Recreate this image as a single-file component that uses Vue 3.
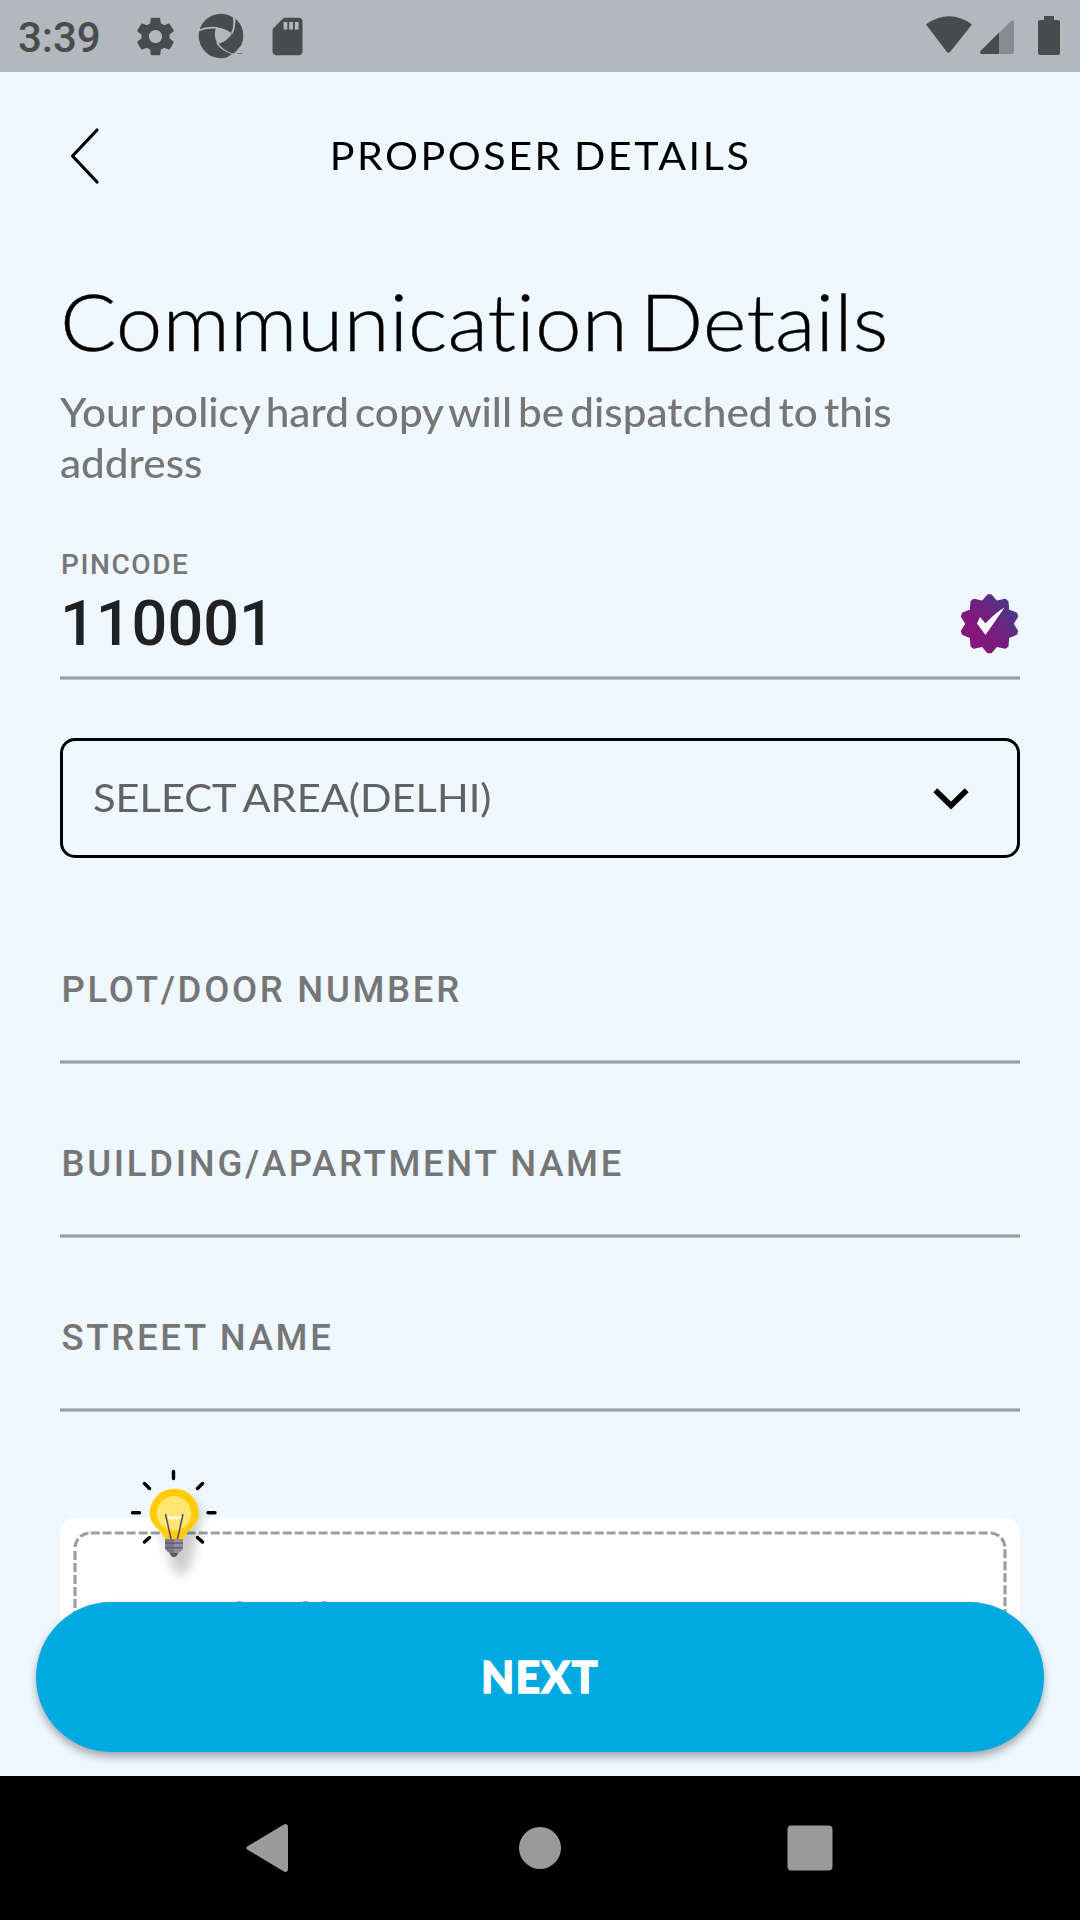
<script setup>
const fields = ['PLOT/DOOR NUMBER', 'BUILDING/APARTMENT NAME', 'STREET NAME']

// Ten-pointed rosette outline for the verified badge
const rosette = (() => {
  const pts = []
  for (let i = 0; i < 10; i++) {
    const a = (Math.PI / 5) * i - Math.PI / 2
    const add = (r, t) => pts.push(`${(29.5 + r * Math.cos(t)).toFixed(2)},${(29.8 + r * Math.sin(t)).toFixed(2)}`)
    add(28.4, a - 0.05)
    add(28.4, a + 0.05)
    add(22.9, a + Math.PI / 10)
  }
  return pts.join(' ')
})()
</script>

<template>
  <div class="screen">
    <div class="status">
      <span class="time">3:39</span>
      <svg class="gear" width="45" height="45" viewBox="0 0 24 24"><path fill="#4a4b4c" d="M19.43 12.98c.04-.32.07-.64.07-.98s-.03-.66-.07-.98l2.11-1.65c.19-.15.24-.42.12-.64l-2-3.46c-.12-.22-.39-.3-.61-.22l-2.49 1c-.52-.4-1.08-.73-1.69-.98l-.38-2.65C14.46 2.18 14.25 2 14 2h-4c-.25 0-.46.18-.49.42l-.38 2.65c-.61.25-1.17.59-1.69.98l-2.49-1c-.23-.09-.49 0-.61.22l-2 3.46c-.13.22-.07.49.12.64l2.11 1.65c-.04.32-.07.65-.07.98s.03.66.07.98l-2.11 1.65c-.19.15-.24.42-.12.64l2 3.46c.12.22.39.3.61.22l2.49-1c.52.4 1.08.73 1.69.98l.38 2.65c.03.24.24.42.49.42h4c.25 0 .46-.18.49-.42l.38-2.65c.61-.25 1.17-.59 1.69-.98l2.49 1c.23.09.49 0 .61-.22l2-3.46c.12-.22.07-.49-.12-.64l-2.11-1.65zM12 15.5c-1.93 0-3.5-1.57-3.5-3.5s1.57-3.5 3.5-3.5 3.5 1.57 3.5 3.5-1.57 3.5-3.5 3.5z"/></svg>
      <svg class="swirl" width="46" height="46" viewBox="0 0 46 46">
        <circle cx="23" cy="23" r="22.3" fill="#4a4b4c"/>
        <path d="M18 14.8 C24 14.5 30 17 33.8 21 C30 26.5 25 30 19.6 31 C16.6 26 16 20 18 14.8Z" fill="#b3b8bf"/>
        <g fill="none" stroke="#b3b8bf" stroke-width="1.6">
          <path d="M.5 17.5 C7 14.5 13 14 20 15"/>
          <path d="M46 31 L35 41 C30 39 23 36 19 30"/>
        </g>
        <path d="M36 2 L38.2 5 L37 12 L35.5 16 Z M29 44.5 L38 38.5 L46 33 V46 H29Z" fill="#b3b8bf"/>
        <path d="M35 4 C43 9 47 19 44 28 C42 34 39 38 35.5 40.6 C31 40 25 36 21.5 31.5 C27 30 32 26.5 34.5 21.5 C37 17 38 11 37.5 6Z" fill="#4a4b4c"/>
        <path d="M35.500 3 C37 9 36.500 15 33.800 20.500" fill="none" stroke="#b3b8bf" stroke-width="1.8"/>
        <path d="M39 40.500h1.500M41.500 41v-1l1 1 1-1v1" stroke="#4a4b4c" stroke-width=".7" fill="none"/>
      </svg>
      <svg class="sd" width="45" height="45" viewBox="0 0 24 24"><path fill="#4a4b4c" d="M18 2h-8L4.020 8 4 20c0 1.100.9 2 2 2h12c1.100 0 2-.9 2-2V4c0-1.100-.9-2-2-2z"/><path fill="#b3b8bf" d="M9.900 4.200h2v4h-2zM12.900 4.200h2v4h-2zM15.900 4.200h2v4h-2z"/></svg>
      <svg class="signals" width="140" height="44" viewBox="922 14 140 44">
        <path d="M927 24.500 Q949 9.500 971 24.500 L949.500 51.500 Q948.500 52.500 947.500 51.500Z" fill="#4a4b4c" stroke="#4a4b4c" stroke-width="1.500" stroke-linejoin="round"/>
        <path d="M999 33 L1011 21 Q1014 19 1014 22 V52 Q1014 54 1012 54 H999Z" fill="#878c90"/>
        <path d="M999 32.500 V54 H982 Q979 53.500 980.500 51Z" fill="#4a4b4c"/>
        <path d="M1044 16H1054V20H1058Q1060 20 1060 22V53Q1060 55 1058 55H1040Q1038 55 1038 53V22Q1038 20 1040 20H1044Z" fill="#4a4b4c"/>
      </svg>
    </div>

    <div class="header">
      <svg class="back" width="32" height="60" viewBox="0 0 32 60"><path d="M28 4 L3.500 30 L28 56" fill="none" stroke="#000" stroke-width="3.200" stroke-linecap="round" stroke-linejoin="round"/></svg>
      <span class="header-title">PROPOSER DETAILS</span>
    </div>

    <main class="content">
      <h1>Communication Details</h1>
      <p class="sub">Your policy hard copy will be dispatched to this<br>address</p>

      <div class="pin">
        <div class="pin-label">PINCODE</div>
        <div class="pin-row">
          <span class="pin-value">110001</span>
          <svg class="badge" width="60" height="60" viewBox="0 0 60 60">
            <defs><linearGradient id="badgeFill" x1="20%" y1="65%" x2="90%" y2="10%"><stop offset="0" stop-color="#84177c"/><stop offset=".35" stop-color="#761e7e"/><stop offset="1" stop-color="#463a8a"/></linearGradient></defs>
            <polygon :points="rosette" fill="url(#badgeFill)" stroke="url(#badgeFill)" stroke-width="2.400" stroke-linejoin="round"/>
            <path d="M17 29.500 L20 23 L25.500 29.500 Q35 19 44.500 13.500 Q36 26 25.500 41Z" fill="#fff"/>
          </svg>
        </div>
        <div class="rule"></div>
      </div>

      <div class="select">
        <span>SELECT AREA(DELHI)</span>
        <svg width="36" height="24" viewBox="0 0 36 24"><path d="M2.300 3.300 L18 18.500 L33.700 3.300" fill="none" stroke="#000" stroke-width="5.600"/></svg>
      </div>

      <div class="fields">
        <div v-for="f in fields" :key="f" class="field">
          <span>{{ f }}</span>
          <div class="rule"></div>
        </div>
      </div>

      <div class="tip">
        <svg class="dashes" width="960" height="140" viewBox="60 1518 960 140">
          <g fill="none" stroke="#9e9e9e" stroke-width="3.200">
            <path d="M90.700 1533 H990 A15 15 0 0 1 1005 1548 V1660" stroke-dasharray="9 3"/>
            <path d="M75 1551 V1660" stroke-dasharray="9 3"/>
            <path d="M75 1547 A15 15 0 0 1 89 1533" stroke-dasharray="9 3"/>
          </g>
          <path d="M236 1602q3.500-1.600 7 0zM302 1602q3.500-1.600 7 0zM321 1602q3.500-1.600 7 0z" fill="#888"/>
        </svg>
        <svg class="bulb" width="120" height="130" viewBox="120 1460 120 130">
          <defs><filter id="bulbShadow" x="-50%" y="-50%" width="200%" height="200%"><feGaussianBlur stdDeviation="6"/></filter></defs>
          <path d="M160 1525 a21 21 0 1 1 40 0 L189 1570 Q181 1578 173 1570Z" fill="#000" opacity=".2" filter="url(#bulbShadow)"/>
          <g stroke="#000" stroke-width="3.400" stroke-linecap="round">
            <path d="M173.500 1471.500v7M144.500 1483.500l5 5M202.500 1483.500l-5 5M132.500 1512.700h7M208 1512.700h7M149.500 1537.500l-5 4.500M197.500 1537.500l5 4.500"/>
          </g>
          <path d="M174.300 1488.700 a24.600 24.600 0 0 1 24.600 24.600 C199 1527 185.500 1529 184 1539.500 H165 C163 1529 149.700 1527 149.700 1513.300 A24.600 24.600 0 0 1 174.300 1488.700Z" fill="#ffcc05"/>
          <circle cx="174" cy="1513.300" r="17.200" fill="#ffe672"/>
          <path d="M168 1517.500q3 -1 4 1.500 2 -4 4.500 0 2 -3 4.500 -1" fill="none" stroke="#fff" stroke-width="1.800"/>
          <path d="M165.500 1514 L171 1539M183 1514 L177.500 1539" fill="none" stroke="#5c5468" stroke-width="1.600"/>
          <path d="M165.300 1539H183V1548Q182 1552 178 1553Q177 1557 174 1557Q171 1557 170 1553Q166 1551 165.300 1548Z" fill="#948f9c"/>
          <path d="M165.300 1539H174V1557Q171 1557 170 1553Q166 1551 165.300 1548Z" fill="#7d778c"/>
          <path d="M165 1543.200h18M165 1547.800h18" stroke="#5f586d" stroke-width="1.200"/>
          <path d="M170 1553H178Q177 1557 174 1557Q171 1557 170 1553Z" fill="#5c5468"/>
        </svg>
      </div>
    </main>

    <button class="next">NEXT</button>

    <div class="nav">
      <svg width="1080" height="144" viewBox="0 1776 1080 144" fill="#9a9a9a">
        <path d="M248 1846 L283 1825 Q288 1822 288 1828 V1868 Q288 1874 283 1871 L248 1850 Q244.500 1848 248 1846Z"/>
        <circle cx="540" cy="1848" r="21"/>
        <rect x="787.500" y="1825.500" width="45" height="45" rx="4"/>
      </svg>
    </div>
  </div>
</template>

<style>
body { margin: 0; }
</style>

<style scoped>
.screen { position: relative; width: 1080px; height: 1920px; background: #eff7ff; overflow: hidden; display: flex; flex-direction: column; font-family: Lato, sans-serif; }
.status { flex: none; height: 72px; background: #b3b8bf; display: flex; align-items: center; box-sizing: border-box; padding: 0 18px; }
.time { width: 114.5px; font: 500 42px/72px Roboto, sans-serif; color: #4a4b4c; padding-top: 4px; }
.gear { flex: none; }
.swirl { margin-left: 20px; flex: none; }
.sd { margin-left: 21px; flex: none; }
.signals { margin-left: auto; }
.header { flex: none; height: 166px; display: flex; align-items: center; justify-content: center; position: relative; }
.back { position: absolute; left: 69px; top: 54px; }
.header-title { font-size: 39px; letter-spacing: 2.4px; word-spacing: -2px; color: #000; margin-right: -1px; white-space: nowrap; transform: scaleX(1.057); }
.content { flex: none; height: 1538px; padding: 43px 60px 0; box-sizing: border-box; overflow: hidden; }
h1 { margin: 0; font-weight: 300; font-size: 79px; line-height: 80px; font-variant-ligatures: none; word-spacing: -10px; color: #000; white-space: nowrap; transform: scaleX(1.06); transform-origin: 0 50%; -webkit-text-stroke: .4px #000; }
.sub { margin: 25px 0 0; font-size: 39.5px; font-weight: 500; line-height: 51px; font-variant-ligatures: none; word-spacing: -4.3px; color: #767676; white-space: nowrap; transform: scaleX(1.07); transform-origin: 0 50%; }
.pin { margin-top: 63px; }
.pin-label { font: 500 28px/28px Roboto, sans-serif; letter-spacing: 1.6px; color: #767676; padding-left: 1px; }
.pin-row { margin-top: 13px; height: 64px; display: flex; justify-content: space-between; align-items: center; }
.pin-value { font: 500 63px/64px Roboto, sans-serif; color: #202122; }
.rule { height: 2px; background: #9e9e9e; border-top: 1px solid #bfc1c4; border-bottom: 1px solid #bfc1c4; }
.pin .rule { margin-top: 20px; }
.select { margin-top: 58px; height: 120px; box-sizing: border-box; border: 3px solid #000; border-radius: 15px; display: flex; align-items: center; justify-content: space-between; padding: 0 48px 0 30px; font-size: 39px; word-spacing: -2px; color: #626262; }
.select span { padding-bottom: 2px; transform: scaleX(1.066); transform-origin: 0 50%; }
.select svg { margin-top: 1px; }
.fields { margin-top: 32px; }
.field { height: 174px; display: flex; flex-direction: column; justify-content: space-between; }
.field span { padding: 75px 0 0 1.5px; font: 500 36.5px/50px Roboto, sans-serif; letter-spacing: 2.7px; color: #767676; white-space: nowrap; }
.tip { margin-top: 106px; position: relative; height: 180px; background: #fff; border-radius: 15px; }
.dashes { display: block; }
.bulb { position: absolute; left: 60px; top: -58px; }
.next { position: absolute; left: 36px; top: 1602px; width: 1008px; height: 150px; border: 0; padding: 0; border-radius: 75px; background: #00a9e0; color: #fff; font: 900 43px/150px Lato, sans-serif; letter-spacing: 1.2px; -webkit-text-stroke: 1.3px #fff; box-shadow: 0 5px 9px rgba(0, 0, 0, .32); }
.nav { flex: none; height: 144px; background: #000; }
.nav svg { display: block; }
</style>
